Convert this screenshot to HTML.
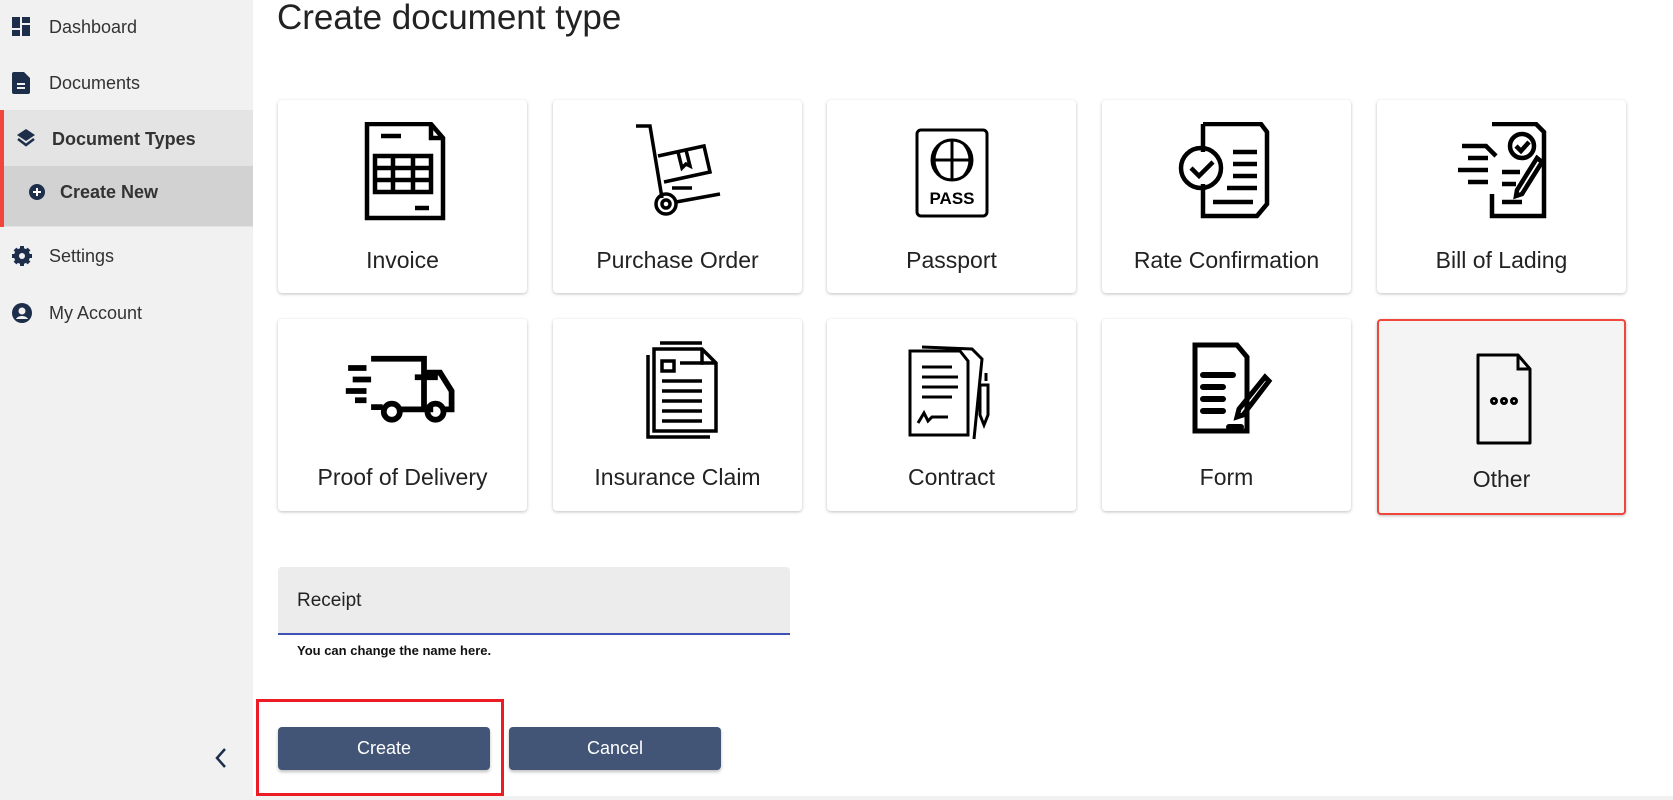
<!DOCTYPE html>
<html><head><meta charset="utf-8"><style>
*{box-sizing:border-box;margin:0;padding:0}
body{width:1673px;height:800px;overflow:hidden;background:#fff;font-family:"Liberation Sans",sans-serif;position:relative;color:#222}
.side{position:absolute;left:0;top:0;width:253px;height:800px;background:#f1f1f1}
.nav{position:absolute;left:0;width:253px;display:flex;align-items:center;font-size:18px;color:#333}
.nav svg{position:absolute;left:12px}
.nav span{position:absolute;left:49px}
.h1{position:absolute;left:277px;top:-2px;font-size:35px;color:#222}
.card{position:absolute;width:249px;background:#fff;border-radius:4px;box-shadow:0 1px 3px rgba(0,0,0,.25);}
.card .lbl{position:absolute;left:0;right:0;text-align:center;font-size:23px;color:#222}
.card svg{position:absolute;left:50%;margin-left:-50px;top:22px}
.btn{position:absolute;top:727px;height:43px;background:#425576;color:#fff;border-radius:4px;font-size:18px;text-align:center;line-height:43px;box-shadow:0 2px 3px rgba(0,0,0,.25)}
</style></head><body>
<div class="side">
  <div class="nav" style="top:13px;height:28px"><svg width="20" height="20" viewBox="0 0 20 20"><rect x="0" y="0" width="8" height="11" fill="#1c2e4a"/><rect x="10" y="0" width="8" height="6" fill="#1c2e4a"/><rect x="10" y="8" width="8" height="11" fill="#1c2e4a"/><rect x="0" y="13" width="8" height="6" fill="#1c2e4a"/></svg><span>Dashboard</span></div>
  <div class="nav" style="top:69px;height:28px"><svg width="20" height="22" viewBox="0 0 20 22"><path d="M2 0h10l6 6v14a2 2 0 0 1-2 2H2a2 2 0 0 1-2-2V2a2 2 0 0 1 2-2z" fill="#1c2e4a"/><rect x="5" y="11" width="8" height="2" fill="#f1f1f1"/><rect x="5" y="15" width="8" height="2" fill="#f1f1f1"/></svg><span>Documents</span></div>
  <div style="position:absolute;top:110px;left:0;width:253px;height:117px;background:#e4e4e4;border-left:4px solid #f0463c"></div>
  <div style="position:absolute;top:166px;left:4px;width:249px;height:60px;background:#d2d2d2"></div>
  <div class="nav" style="top:125px;height:28px;font-weight:bold"><svg style="left:15px" width="22" height="22" viewBox="0 0 22 22"><path d="M11 1l9 6-9 6-9-6z" fill="#1c2e4a"/><path d="M3 11l8 6 8-6" stroke="#1c2e4a" stroke-width="2.5" fill="none"/></svg><span style="left:52px">Document Types</span></div>
  <div class="nav" style="top:178px;height:28px;font-weight:bold"><svg style="left:29px" width="16" height="16" viewBox="0 0 16 16"><circle cx="8" cy="8" r="8" fill="#1c2e4a"/><path d="M8 4v8M4 8h8" stroke="#fff" stroke-width="2"/></svg><span style="left:60px">Create New</span></div>
  <div class="nav" style="top:242px;height:28px"><svg width="20" height="20" viewBox="0 0 20 20"><circle cx="10" cy="10" r="6" fill="none" stroke="#1c2e4a" stroke-width="4"/><path d="M10 0v20M0 10h20M3 3l14 14M17 3L3 17" stroke="#1c2e4a" stroke-width="4"/><circle cx="10" cy="10" r="3" fill="#f1f1f1"/></svg><span>Settings</span></div>
  <div class="nav" style="top:299px;height:28px"><svg width="20" height="20" viewBox="0 0 20 20"><circle cx="10" cy="10" r="10" fill="#1c2e4a"/><circle cx="10" cy="8" r="3.5" fill="#f1f1f1"/><path d="M4 16c2-4 10-4 12 0" fill="#f1f1f1"/></svg><span>My Account</span></div>
  <svg style="position:absolute;left:214px;top:747px" width="14" height="22" viewBox="0 0 14 22"><path d="M11 2L3 11l8 9" stroke="#1c2e4a" stroke-width="2.5" fill="none"/></svg>
</div>
<div class="h1">Create document type</div>

<div class="card" style="left:278px;top:100px;height:193px"><svg width="100" height="100" viewBox="0 0 100 100" fill="none" stroke="#000" stroke-width="4.5"><path d="M14 2h64l12 14v80H14z"/><path d="M78 2v14h12"/><rect x="22" y="34" width="56" height="36"/><path d="M22 46h56M22 58h56M40 34v36M60 34v36M28 14h20M62 86h14"/></svg><div class="lbl" style="top:147px">Invoice</div></div>
<div class="card" style="left:553px;top:100px;height:193px"><svg width="100" height="100" viewBox="0 0 100 100" fill="none" stroke="#000" stroke-width="3.5"><path d="M8 4h14l12 72"/><circle cx="38" cy="82" r="10"/><circle cx="38" cy="82" r="4"/><path d="M48 80l44-8M30 34l46-10 6 26-46 10M50 30l4 16 4-4 4 2-4-16M44 66h20"/></svg><div class="lbl" style="top:147px">Purchase Order</div></div>
<div class="card" style="left:827px;top:100px;height:193px"><svg width="100" height="100" viewBox="0 0 100 100" fill="none" stroke="#000" stroke-width="3"><rect x="15" y="8" width="70" height="86" rx="4"/><circle cx="50" cy="38" r="20"/><path d="M30 38h40M50 18v40M38 22c-8 10-8 22 0 32M62 22c8 10 8 22 0 32"/><text x="50" y="82" font-family="Liberation Sans" font-weight="bold" font-size="17" text-anchor="middle" fill="#000" stroke="none">PASS</text></svg><div class="lbl" style="top:147px">Passport</div></div>
<div class="card" style="left:1102px;top:100px;height:193px"><svg width="100" height="100" viewBox="0 0 100 100" fill="none" stroke="#000" stroke-width="4.5"><path d="M26 2h58l6 8v72l-10 12H26V62"/><path d="M26 30V2"/><circle cx="24" cy="46" r="20"/><path d="M14 46l8 8 14-14M56 30h24M56 42h24M56 54h24M50 66h30M36 80h40"/></svg><div class="lbl" style="top:147px">Rate Confirmation</div></div>
<div class="card" style="left:1377px;top:100px;height:193px"><svg width="100" height="100" viewBox="0 0 100 100" fill="none" stroke="#000" stroke-width="4.5"><path d="M40 2h44l8 8v84H40V72"/><circle cx="70" cy="24" r="12"/><path d="M64 24l5 5 8-9M10 24h24l10 10M16 36h20M6 48h30M16 60h20M50 50h18M50 62h14M50 80h20M90 40L70 72l-6 2 1-6 20-32z"/></svg><div class="lbl" style="top:147px">Bill of Lading</div></div>

<div class="card" style="left:278px;top:319px;height:192px"><svg width="100" height="100" viewBox="0 0 100 100" fill="none" stroke="#000" stroke-width="5" style="top:22px;margin-left:-52px;transform:scale(1.15)"><path d="M24 22h46v42M70 34h14l10 16v16H86M24 64h10M50 66h28M62 38h20"/><circle cx="42" cy="68" r="7"/><circle cx="80" cy="68" r="7"/><path d="M4 30h16M8 40h16M2 50h18M10 58h10"/></svg><div class="lbl" style="top:145px">Proof of Delivery</div></div>
<div class="card" style="left:553px;top:319px;height:192px"><svg width="100" height="100" viewBox="0 0 100 100" fill="none" stroke="#000" stroke-width="3.5"><path d="M20 14v82h62M26 8v82h62V22L74 8z M74 8v14h14M32 2h42"/><rect x="34" y="20" width="12" height="10"/><path d="M52 22h24M34 40h40M34 50h40M34 60h40M34 70h40M34 80h40"/></svg><div class="lbl" style="top:145px">Insurance Claim</div></div>
<div class="card" style="left:827px;top:319px;height:192px"><svg width="100" height="100" viewBox="0 0 100 100" fill="none" stroke="#000" stroke-width="3"><path d="M8 10h50l8 10v74H8zM20 6l50 2 10 10-8 80M20 26h30M20 36h36M20 46h36M20 56h30M16 82l6-10 4 8 4-4h16M86 44v30l-4 10-4-10V44zM84 40v-8"/></svg><div class="lbl" style="top:145px">Contract</div></div>
<div class="card" style="left:1102px;top:319px;height:192px"><svg width="100" height="100" viewBox="0 0 100 100" fill="none" stroke="#000" stroke-width="6"><path d="M18 4h42l10 12v74H18z" stroke-width="5"/><path d="M26 34h30M26 46h20M26 58h20M26 70h20M52 86h12" stroke-linecap="round"/><path d="M92 40L66 74l-6 2 2-8 26-32z" stroke-width="5"/></svg><div class="lbl" style="top:145px">Form</div></div>
<div class="card" style="left:1377px;top:319px;height:196px;background:#f4f4f4;border:2px solid #f0463c"><svg width="100" height="100" viewBox="0 0 100 100" fill="none" stroke="#000" stroke-width="3" style="top:28px"><path d="M26 6h40l12 14v74H26z" stroke-linejoin="round"/><path d="M66 6v14h12"/><circle cx="42" cy="52" r="2.5"/><circle cx="52" cy="52" r="2.5"/><circle cx="62" cy="52" r="2.5"/></svg><div class="lbl" style="top:145px">Other</div></div>

<div style="position:absolute;left:278px;top:567px;width:512px;height:68px;background:#ececec;border-radius:4px 4px 0 0;border-bottom:2px solid #3f51b5"></div>
<div style="position:absolute;left:297px;top:590px;font-size:19px;color:#222">Receipt</div>
<div style="position:absolute;left:297px;top:643px;font-size:13px;font-weight:bold;color:#111">You can change the name here.</div>

<div style="position:absolute;left:256px;top:699px;width:248px;height:97px;border:3px solid #ed1c24"></div>
<div class="btn" style="left:278px;width:212px">Create</div>
<div class="btn" style="left:509px;width:212px">Cancel</div>
<div style="position:absolute;left:253px;top:796px;width:1420px;height:4px;background:#f1f1f1"></div>
</body></html>
